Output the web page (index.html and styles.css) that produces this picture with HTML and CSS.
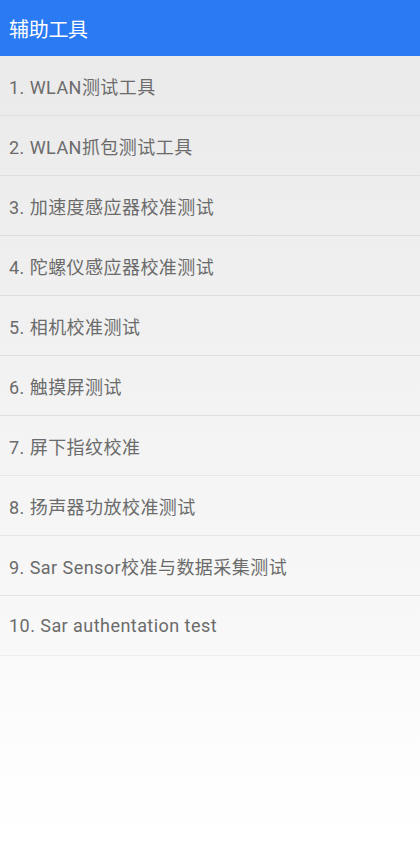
FILE: index.html
```html
<!DOCTYPE html>
<html lang="zh-CN">
<head>
    <meta charset="UTF-8">
    <meta name="viewport" content="width=device-width, initial-scale=1.0">
    <title>辅助工具</title>
    <link rel="stylesheet" href="styles.css">
</head>
<body>
    <div class="toolbar">
        <div class="toolbar-title">辅助工具</div>
    </div>

    <ul class="tool-list">
        <li class="tool-item">1. WLAN测试工具</li>
        <li class="tool-item">2. WLAN抓包测试工具</li>
        <li class="tool-item">3. 加速度感应器校准测试</li>
        <li class="tool-item">4. 陀螺仪感应器校准测试</li>
        <li class="tool-item">5. 相机校准测试</li>
        <li class="tool-item">6. 触摸屏测试</li>
        <li class="tool-item">7. 屏下指纹校准</li>
        <li class="tool-item">8. 扬声器功放校准测试</li>
        <li class="tool-item">9. Sar Sensor校准与数据采集测试</li>
        <li class="tool-item">10. Sar authentation test</li>
    </ul>
</body>
</html>
```

FILE: styles.css
```css
html, body {
    margin: 0;
    padding: 0;
}

body {
    font-family: Roboto, "Noto Sans CJK SC", sans-serif;
    width: 420px;
    min-height: 841px;
    background: linear-gradient(to bottom, #e9e9e9 0px, #f0f0f0 300px, #f8f8f8 620px, #fdfdfd 760px, #ffffff 841px);
}

.toolbar {
    height: 56px;
    background-color: #2a7af4;
    display: flex;
    align-items: center;
    padding: 0 9px;
}

.toolbar-title {
    color: #ffffff;
    font-size: 20px;
    letter-spacing: -0.3px;
}

.tool-list {
    list-style: none;
    margin: 0;
    padding: 0;
}

.tool-item {
    height: 59px;
    border-bottom: 1px solid #dedede;
    display: flex;
    align-items: center;
    padding: 0 9px;
    font-size: 18px;
    letter-spacing: 0.45px;
    color: #6b6b6b;
}

.tool-item:nth-child(n+7) {
    border-bottom-color: #e6e6e6;
}

.tool-item:last-child {
    border-bottom-color: #eeeeee;
}
```
